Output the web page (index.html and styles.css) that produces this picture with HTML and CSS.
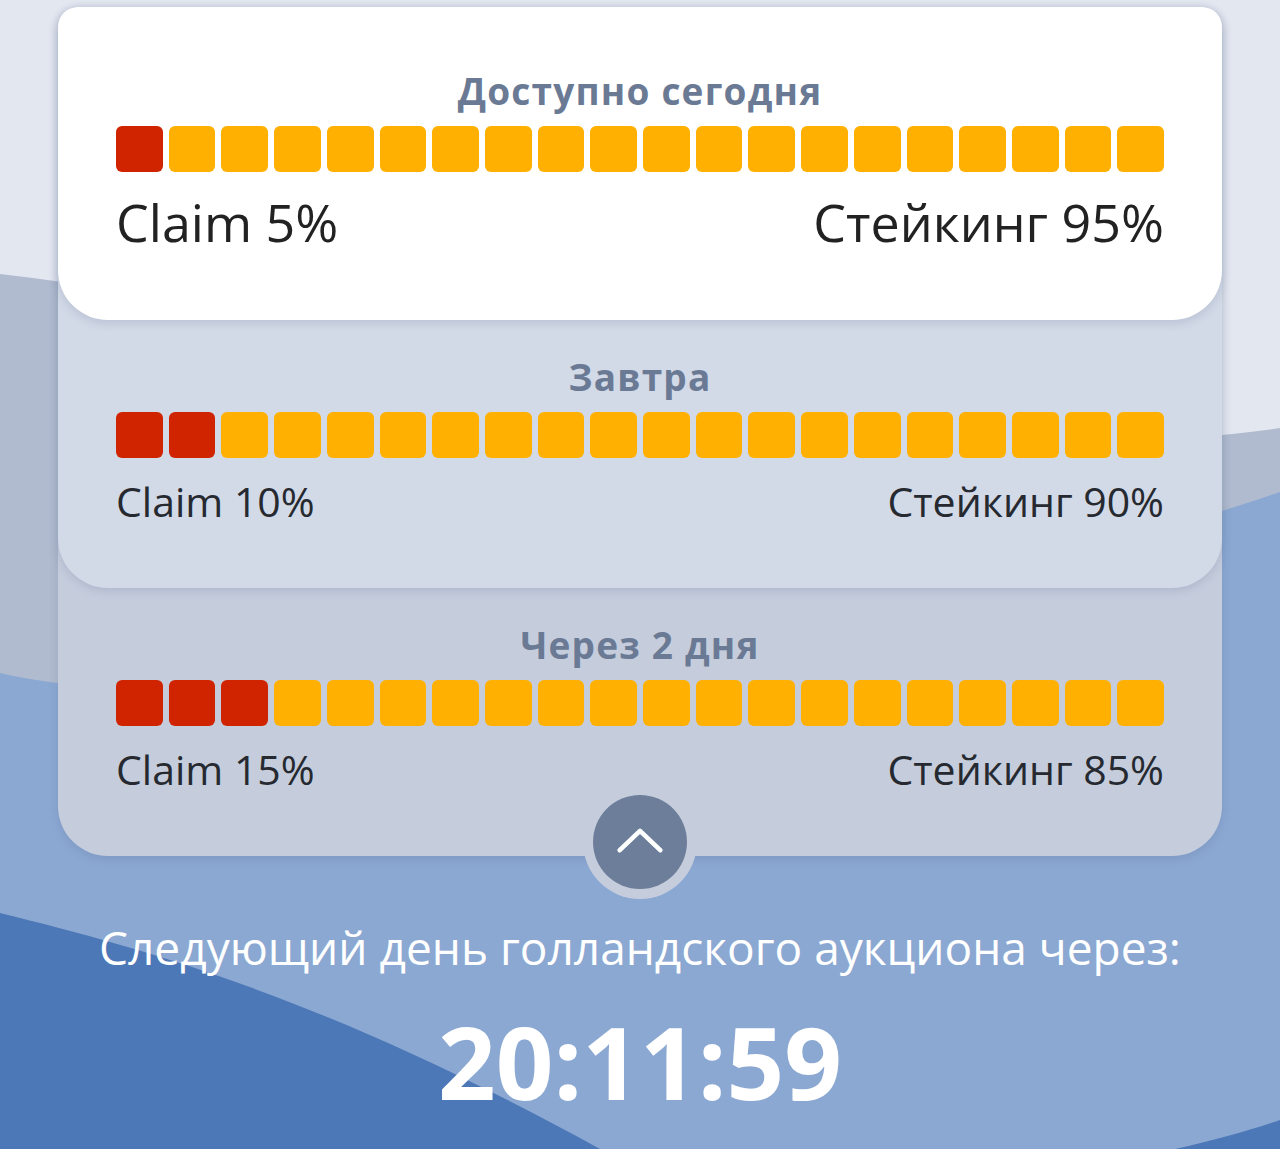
FILE: index.html
```html
<!DOCTYPE html>
<html lang="ru">
<head>
<meta charset="utf-8">
<title>Аукцион</title>
<link rel="stylesheet" href="styles.css">
</head>
<body>
<main class="page">
  <div class="stack">
    <div class="card card3">
      <div class="card card2">
        <div class="card card1">
          <h2 class="title">Доступно сегодня</h2>
          <div class="bar">
            <span class="seg red"></span><span class="seg"></span><span class="seg"></span><span class="seg"></span><span class="seg"></span>
            <span class="seg"></span><span class="seg"></span><span class="seg"></span><span class="seg"></span><span class="seg"></span>
            <span class="seg"></span><span class="seg"></span><span class="seg"></span><span class="seg"></span><span class="seg"></span>
            <span class="seg"></span><span class="seg"></span><span class="seg"></span><span class="seg"></span><span class="seg"></span>
          </div>
          <div class="labels big">
            <span>Claim 5%</span>
            <span>Стейкинг 95%</span>
          </div>
        </div>
        <div class="section">
          <h2 class="title">Завтра</h2>
          <div class="bar">
            <span class="seg red"></span><span class="seg red"></span><span class="seg"></span><span class="seg"></span><span class="seg"></span>
            <span class="seg"></span><span class="seg"></span><span class="seg"></span><span class="seg"></span><span class="seg"></span>
            <span class="seg"></span><span class="seg"></span><span class="seg"></span><span class="seg"></span><span class="seg"></span>
            <span class="seg"></span><span class="seg"></span><span class="seg"></span><span class="seg"></span><span class="seg"></span>
          </div>
          <div class="labels">
            <span>Claim 10%</span>
            <span>Стейкинг 90%</span>
          </div>
        </div>
      </div>
      <div class="section">
        <h2 class="title">Через 2 дня</h2>
        <div class="bar">
          <span class="seg red"></span><span class="seg red"></span><span class="seg red"></span><span class="seg"></span><span class="seg"></span>
          <span class="seg"></span><span class="seg"></span><span class="seg"></span><span class="seg"></span><span class="seg"></span>
          <span class="seg"></span><span class="seg"></span><span class="seg"></span><span class="seg"></span><span class="seg"></span>
          <span class="seg"></span><span class="seg"></span><span class="seg"></span><span class="seg"></span><span class="seg"></span>
        </div>
        <div class="labels">
          <span>Claim 15%</span>
          <span>Стейкинг 85%</span>
        </div>
      </div>
      <button class="toggle" type="button" aria-label="Свернуть">
        <span class="toggle-inner">
          <svg width="50" height="30" viewBox="0 0 50 30"><polyline points="3,25 25,4 47,25" fill="none" stroke="#fff" stroke-width="5" stroke-linecap="round" stroke-linejoin="round"/></svg>
        </span>
      </button>
    </div>
  </div>
  <p class="next">Следующий день голландского аукциона через:</p>
  <p class="timer">20:11:59</p>
</main>
</body>
</html>
```
FILE: styles.css
```css
html, body {
  margin: 0;
  padding: 0;
}
body {
  width: 1280px;
  height: 1149px;
  overflow: hidden;
  font-family: "Open Sans", "Noto Sans", sans-serif;
  background-color: #e3e7f0;
  background-image: url("data:image/svg+xml,%3Csvg xmlns='http://www.w3.org/2000/svg' width='1280' height='1149' viewBox='0 0 1280 1149'%3E%3Crect width='1280' height='1149' fill='%23e3e7f0'/%3E%3Cpath d='M0 274 C 400 320, 900 485, 1280 428 L1280 1149 L0 1149Z' fill='%23b0bbcf'/%3E%3Cpath d='M0 673 C 300 740, 900 620, 1280 492 L1280 1149 L0 1149Z' fill='%238ba8d2'/%3E%3Cpath d='M0 913 C 150 950, 330 1000, 600 1149 L0 1149Z' fill='%234c78b7'/%3E%3Cpath d='M1175 1149 C 1215 1140, 1250 1130, 1280 1120 L1280 1149Z' fill='%234c78b7'/%3E%3C/svg%3E");
  background-size: 1280px 1149px;
  background-repeat: no-repeat;
}
.page {
  display: flex;
  flex-direction: column;
  align-items: center;
  padding-top: 7px;
}
.stack {
  width: 1164px;
}
.card {
  border-radius: 20px 20px 50px 50px;
  box-shadow: 0 3px 10px rgba(70, 90, 130, 0.18);
}
.card1 {
  background: #ffffff;
  padding: 64px 58px 68px;
  position: relative;
  z-index: 3;
}
.card2 {
  background: #d2d9e7;
  position: relative;
  z-index: 2;
}
.card3 {
  background: #c5cddd;
  position: relative;
  z-index: 1;
}
.section {
  padding: 37px 58px 63px;
}
.title {
  margin: 0;
  text-align: center;
  font-size: 37px;
  line-height: 40px;
  letter-spacing: 1.2px;
  font-weight: 700;
  color: #6b7a94;
}
.bar {
  display: flex;
  gap: 6px;
  height: 46px;
  margin-top: 15px;
}
.card1 .bar {
  margin-top: 15px;
}
.seg {
  flex: 1;
  border-radius: 6px;
  background: #ffb000;
}
.seg.red {
  background: #d02400;
}
.labels {
  display: flex;
  justify-content: space-between;
  margin-top: 19px;
  font-size: 41px;
  line-height: 48px;
  color: #262a30;
}
.labels.big {
  margin-top: 20px;
  font-size: 52px;
  line-height: 60px;
  color: #222222;
}
.toggle {
  position: absolute;
  left: 50%;
  bottom: -43px;
  transform: translateX(-50%);
  width: 114px;
  height: 114px;
  padding: 10px;
  border: 0;
  border-radius: 50%;
  background: #c5cddd;
  box-sizing: border-box;
}
.toggle-inner {
  display: flex;
  align-items: center;
  justify-content: center;
  width: 94px;
  height: 94px;
  border-radius: 50%;
  background: #6d7e9a;
}
.toggle-inner svg {
  width: 46px;
  height: 28px;
  margin-top: -2px;
}
.next {
  margin: 64px 0 0;
  font-size: 46px;
  line-height: 54px;
  color: #ffffff;
  text-align: center;
}
.timer {
  margin: 32px 0 0;
  font-size: 101px;
  line-height: 110px;
  font-weight: 700;
  color: #ffffff;
  text-align: center;
}
```
